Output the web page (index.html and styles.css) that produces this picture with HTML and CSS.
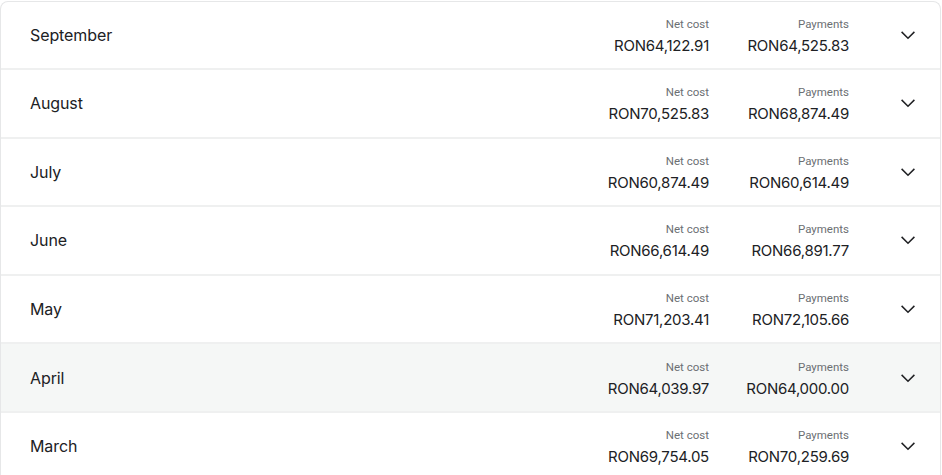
FILE: index.html
```html
<!DOCTYPE html>
<html lang="en">
<head>
  <meta charset="UTF-8" />
  <title>Monthly costs</title>
  <link rel="stylesheet" href="styles.css">
</head>
<body>

  <div class="months">
    <div class="month">
      <div class="month-name">September</div>
      <div class="amount">
        <span class="label">Net cost</span>
        <span class="value">RON64,122.91</span>
      </div>
      <div class="amount">
        <span class="label">Payments</span>
        <span class="value">RON64,525.83</span>
      </div>
      <div class="chevron"><svg viewBox="0 0 24 24" width="24" height="24"><path d="M5.6 8.9 12 15.3l6.4-6.4" fill="none" stroke="#202124" stroke-width="1.5"/></svg></div>
    </div>

    <div class="month">
      <div class="month-name">August</div>
      <div class="amount">
        <span class="label">Net cost</span>
        <span class="value">RON70,525.83</span>
      </div>
      <div class="amount">
        <span class="label">Payments</span>
        <span class="value">RON68,874.49</span>
      </div>
      <div class="chevron"><svg viewBox="0 0 24 24" width="24" height="24"><path d="M5.6 8.9 12 15.3l6.4-6.4" fill="none" stroke="#202124" stroke-width="1.5"/></svg></div>
    </div>

    <div class="month">
      <div class="month-name">July</div>
      <div class="amount">
        <span class="label">Net cost</span>
        <span class="value">RON60,874.49</span>
      </div>
      <div class="amount">
        <span class="label">Payments</span>
        <span class="value">RON60,614.49</span>
      </div>
      <div class="chevron"><svg viewBox="0 0 24 24" width="24" height="24"><path d="M5.6 8.9 12 15.3l6.4-6.4" fill="none" stroke="#202124" stroke-width="1.5"/></svg></div>
    </div>

    <div class="month">
      <div class="month-name">June</div>
      <div class="amount">
        <span class="label">Net cost</span>
        <span class="value">RON66,614.49</span>
      </div>
      <div class="amount">
        <span class="label">Payments</span>
        <span class="value">RON66,891.77</span>
      </div>
      <div class="chevron"><svg viewBox="0 0 24 24" width="24" height="24"><path d="M5.6 8.9 12 15.3l6.4-6.4" fill="none" stroke="#202124" stroke-width="1.5"/></svg></div>
    </div>

    <div class="month">
      <div class="month-name">May</div>
      <div class="amount">
        <span class="label">Net cost</span>
        <span class="value">RON71,203.41</span>
      </div>
      <div class="amount">
        <span class="label">Payments</span>
        <span class="value">RON72,105.66</span>
      </div>
      <div class="chevron"><svg viewBox="0 0 24 24" width="24" height="24"><path d="M5.6 8.9 12 15.3l6.4-6.4" fill="none" stroke="#202124" stroke-width="1.5"/></svg></div>
    </div>

    <div class="month hover">
      <div class="month-name">April</div>
      <div class="amount">
        <span class="label">Net cost</span>
        <span class="value">RON64,039.97</span>
      </div>
      <div class="amount">
        <span class="label">Payments</span>
        <span class="value">RON64,000.00</span>
      </div>
      <div class="chevron"><svg viewBox="0 0 24 24" width="24" height="24"><path d="M5.6 8.9 12 15.3l6.4-6.4" fill="none" stroke="#202124" stroke-width="1.5"/></svg></div>
    </div>

    <div class="month">
      <div class="month-name">March</div>
      <div class="amount">
        <span class="label">Net cost</span>
        <span class="value">RON69,754.05</span>
      </div>
      <div class="amount">
        <span class="label">Payments</span>
        <span class="value">RON70,259.69</span>
      </div>
      <div class="chevron"><svg viewBox="0 0 24 24" width="24" height="24"><path d="M5.6 8.9 12 15.3l6.4-6.4" fill="none" stroke="#202124" stroke-width="1.5"/></svg></div>
    </div>
  </div>

</body>
</html>
```

FILE: styles.css
```css
* {
  margin: 0;
  padding: 0;
  box-sizing: border-box;
}
body {
  font-family: 'Inter', 'Roboto', sans-serif;
  background: #fff;
  color: #202124;
  padding: 1px 1px 0 0;
  overflow: hidden;
}
.months {
  border: 1px solid #e6e7e8;
  border-bottom: none;
  border-radius: 8px 8px 0 0;
  background: #fff;
}
.month {
  display: flex;
  align-items: center;
  height: 68.6px;
  padding: 0 20px 0 29px;
  border-bottom: 2px solid #eff0f0;
}
.month:first-child {
  height: 68px;
  border-radius: 8px 8px 0 0;
}
.month.hover {
  background: #f5f7f6;
}
.month-name {
  flex: 1;
  font-size: 16px;
  letter-spacing: -0.1px;
}
.amount {
  display: flex;
  flex-direction: column;
  align-items: flex-end;
  width: 120px;
  margin-left: 20px;
  padding-top: 4px;
}
.label {
  font-family: 'Roboto', sans-serif;
  font-size: 11.5px;
  line-height: 16px;
  color: #6b6f73;
}
.value {
  margin-top: 2px;
  font-size: 15px;
  line-height: 24px;
  letter-spacing: -0.25px;
}
.chevron {
  width: 24px;
  height: 24px;
  margin-left: 47px;
}
.chevron svg {
  display: block;
}
```
